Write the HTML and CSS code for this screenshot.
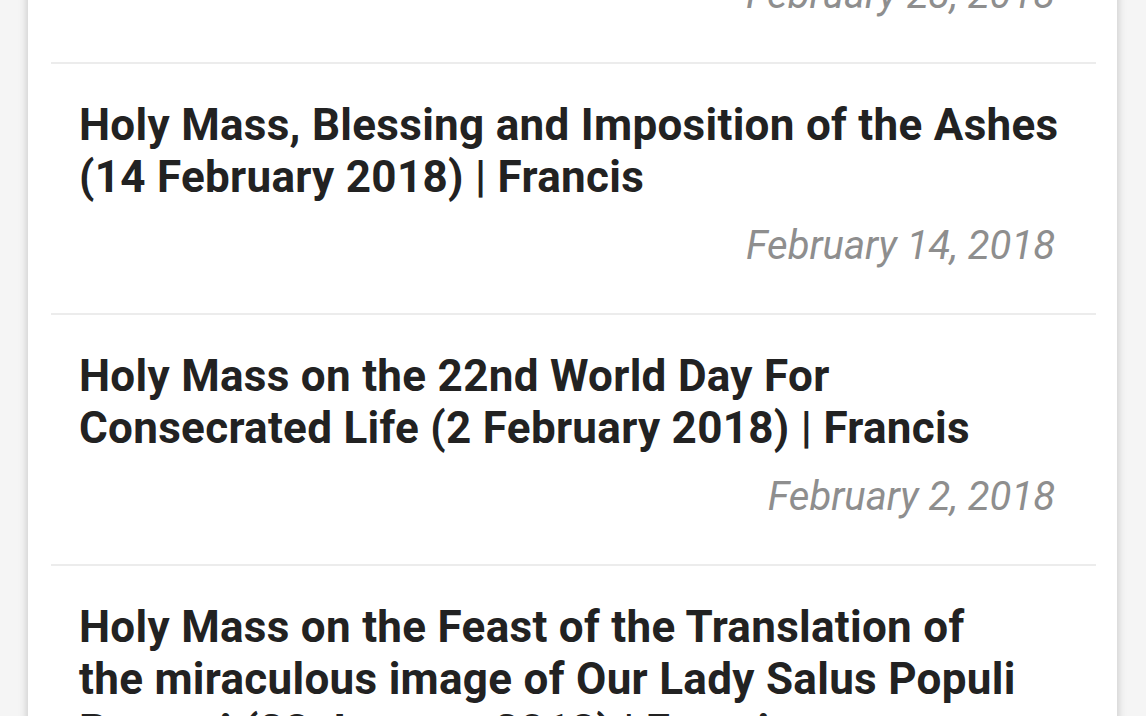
FILE: index.html
```html
<!DOCTYPE html>
<html lang="en">
<head>
<meta charset="utf-8">
<title>Homilies</title>
<link rel="stylesheet" href="styles.css">
</head>
<body>
<main class="card">
  <ul class="list">
    <li class="item">
      <h2 class="title">Holy Mass on the Memorial of Saint Polycarp (23 February 2018) | Francis</h2>
      <p class="date">February 23, 2018</p>
    </li>
    <li class="item">
      <h2 class="title">Holy Mass, Blessing and Imposition of the Ashes (14 February 2018) | Francis</h2>
      <p class="date">February 14, 2018</p>
    </li>
    <li class="item">
      <h2 class="title">Holy Mass on the 22nd World Day For Consecrated Life (2 February 2018) | Francis</h2>
      <p class="date">February 2, 2018</p>
    </li>
    <li class="item">
      <h2 class="title">Holy Mass on the Feast of the Translation of<br>the miraculous image of Our Lady Salus Populi Romani (28 January 2018) | Francis</h2>
      <p class="date">January 28, 2018</p>
    </li>
    <li class="item">
      <h2 class="title">Holy Mass for the World Day of Migrants and Refugees (14 January 2018) | Francis</h2>
      <p class="date">January 14, 2018</p>
    </li>
  </ul>
</main>
</body>
</html>
```

FILE: styles.css
```css
html, body {
  margin: 0;
  padding: 0;
  background: #f5f5f5;
  height: 100%;
  overflow: hidden;
}
body {
  font-family: Roboto, "Liberation Sans", sans-serif;
}
.card {
  margin: -187px 29px 0 28px;
  background: #ffffff;
  box-shadow: 0 0 9px rgba(0, 0, 0, 0.22);
  padding: 0 21px 0 23px;
}
.list {
  list-style: none;
  margin: 0;
  padding: 0;
}
.item {
  padding: 35px 20px 45px 28px;
  border-top: 2px solid #ececec;
}
.item:first-child {
  border-top: none;
}
.title {
  margin: 0;
  font-size: 44px;
  line-height: 52px;
  font-weight: 700;
  letter-spacing: 0.3px;
  color: #222222;
}
.date {
  margin: 21px 21px 0 0;
  text-align: right;
  font-style: italic;
  font-size: 40px;
  line-height: 44px;
  color: #8e8e8e;
}
```
